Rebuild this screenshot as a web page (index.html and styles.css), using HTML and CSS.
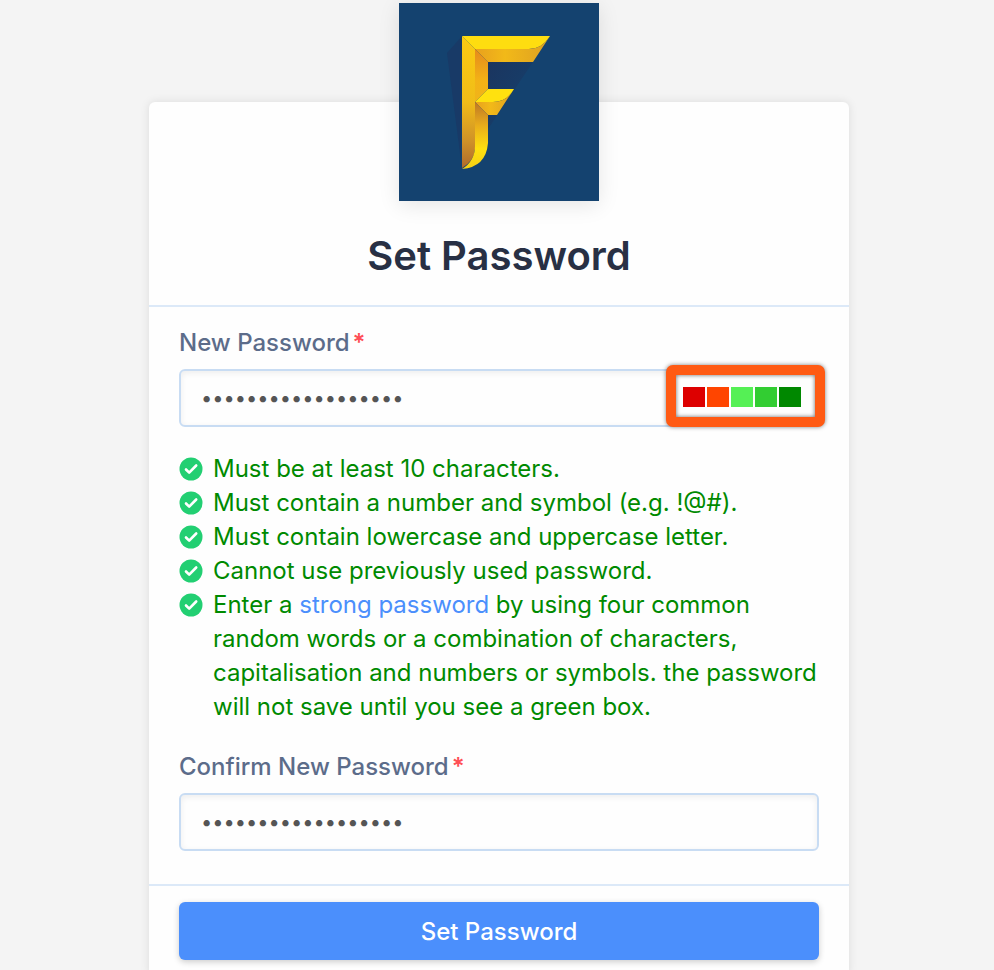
FILE: index.html
```
<!DOCTYPE html>
<html lang="en">
<head>
    <meta charset="utf-8">
    <title>Set Password</title>
    <meta name="viewport" content="width=device-width, initial-scale=1.0">
    <link rel="stylesheet" href="styles.css">
</head>
<body>
    <!-- shared check icon for the rules list -->
    <svg class="icon-defs" aria-hidden="true">
        <symbol id="check" viewBox="0 0 24 24">
            <circle cx="12" cy="12" r="11.5" fill="#22cf72"/>
            <path d="M7 12.5l3.2 3.2L17.2 8.5" fill="none" stroke="#fff" stroke-width="2.6" stroke-linecap="round" stroke-linejoin="round"/>
        </symbol>
    </svg>

    <form class="card">
        <div class="card-header">
            <svg class="logo" viewBox="0 0 200 198" role="img" aria-label="Logo">
                <defs>
                    <linearGradient id="stem" x1="0" y1="0" x2="0" y2="1">
                        <stop offset="0" stop-color="#fbcb12"/>
                        <stop offset="0.5" stop-color="#f0bc18"/>
                        <stop offset="0.8" stop-color="#cf9128"/>
                        <stop offset="1" stop-color="#b06a2c"/>
                    </linearGradient>
                    <linearGradient id="inner" x1="0" y1="0" x2="0" y2="1">
                        <stop offset="0" stop-color="#e58a1c"/>
                        <stop offset="0.6" stop-color="#f3b216"/>
                        <stop offset="1" stop-color="#f0b41a"/>
                    </linearGradient>
                    <linearGradient id="bar" x1="0" y1="0" x2="1" y2="0">
                        <stop offset="0" stop-color="#e8a01e"/>
                        <stop offset="0.4" stop-color="#f2b918"/>
                        <stop offset="1" stop-color="#dda023"/>
                    </linearGradient>
                    <linearGradient id="hook" x1="0" y1="0" x2="0" y2="1">
                        <stop offset="0" stop-color="#bd7626"/>
                        <stop offset="0.35" stop-color="#e9ad1b"/>
                        <stop offset="0.7" stop-color="#ffe00f"/>
                        <stop offset="1" stop-color="#f5cf14"/>
                    </linearGradient>
                    <linearGradient id="shade" x1="0" y1="0" x2="1" y2="1">
                        <stop offset="0" stop-color="#1b355f"/>
                        <stop offset="1" stop-color="#14426f"/>
                    </linearGradient>
                </defs>
                <rect width="200" height="198" fill="#14426f"/>
                <path d="M63 33L48 50L62 158z" fill="#183a67"/>
                <path d="M89 59h45L89 126z" fill="url(#shade)"/>
                <path d="M63 33L76 46V146Q75 158 63 165z" fill="url(#stem)"/>
                <path d="M63 33H151Q143 46 130 46H76z" fill="#fedd10"/>
                <path d="M76 46H130Q143 46 151 33L134 59H89z" fill="url(#bar)"/>
                <path d="M76 46L89 59V86L76 99z" fill="url(#inner)"/>
                <path d="M89 86H115Q108 99 94 99H76z" fill="#ffe10f"/>
                <path d="M76 99H94Q108 99 115 86L98 112H89z" fill="url(#bar)"/>
                <path d="M76 99L89 112V140Q87 164 63 166Q76 158 76 143z" fill="url(#hook)"/>
            </svg>
            <h1>Set Password</h1>
        </div>

        <div class="card-body">
            <label for="newPassword">New Password<span class="required">*</span></label>
            <div class="password-field">
                <input type="password" id="newPassword" value="Correct-Horse-2024">
                <div class="strength" role="img" aria-label="Password strength">
                    <span class="box very-weak"></span>
                    <span class="box weak"></span>
                    <span class="box fair"></span>
                    <span class="box good"></span>
                    <span class="box strong"></span>
                </div>
            </div>

            <ul class="rules">
                <li><svg class="check"><use href="#check"/></svg><span>Must be at least 10 characters.</span></li>
                <li><svg class="check"><use href="#check"/></svg><span>Must contain a number and symbol (e.g. !@#).</span></li>
                <li><svg class="check"><use href="#check"/></svg><span>Must contain lowercase and uppercase letter.</span></li>
                <li><svg class="check"><use href="#check"/></svg><span>Cannot use previously used password.</span></li>
                <li><svg class="check"><use href="#check"/></svg><span>Enter a <a href="#">strong password</a> by using four common random words or a combination of characters, capitalisation and numbers or symbols. the password will not save until you see a green box.</span></li>
            </ul>

            <label for="confirmPassword">Confirm New Password<span class="required">*</span></label>
            <div class="password-field">
                <input type="password" id="confirmPassword" value="Correct-Horse-2024">
            </div>
        </div>

        <div class="card-footer">
            <button type="submit">Set Password</button>
        </div>
    </form>
</body>
</html>
```
FILE: styles.css
```
* {
    box-sizing: border-box;
}

body {
    margin: 0;
    padding: 102px 16px 0 20px;
    background: #f4f4f4;
    font-family: Inter, "Liberation Sans", sans-serif;
    font-size: 24px;
    line-height: 34px;
}

.icon-defs {
    display: none;
}

.card {
    max-width: 700px;
    margin: 0 auto;
    background: #fefefe;
    border-radius: 6px;
    box-shadow: 0 0 10px rgba(0, 0, 0, 0.1);
}

.card-header {
    display: flex;
    flex-direction: column;
    align-items: center;
    padding-bottom: 20px;
    border-bottom: 2px solid #dce9f8;
}

.logo {
    width: 200px;
    height: 198px;
    margin-top: -99px;
    box-shadow: 0 4px 20px rgba(0, 0, 0, 0.1);
}

h1 {
    margin: 26px 0 0;
    color: #283044;
    font-size: 40px;
    font-weight: 600;
    line-height: 58px;
}

.card-body {
    padding: 19px 30px 33px;
}

label {
    display: block;
    margin-bottom: 9px;
    color: #5c6c8a;
    font-weight: 500;
}

.required {
    margin-left: 3px;
    color: #ff4f55;
    font-weight: 600;
}

.password-field {
    position: relative;
}

input {
    display: block;
    width: 100%;
    height: 58px;
    padding: 0 20px;
    border: 2px solid #c8dcf3;
    border-radius: 6px;
    background: #fefefe;
    box-shadow: inset 0 2px 6px rgba(0, 0, 0, 0.07);
    color: #555;
    font-family: inherit;
    font-size: 20px;
}

/* sits over the right end of the input */
.strength {
    position: absolute;
    top: -4px;
    right: -6px;
    display: flex;
    gap: 2px;
    width: 159px;
    height: 62px;
    padding: 12px 7px;
    border: 10px solid #ff5a13;
    border-radius: 7px;
    background: #fefefe;
    box-shadow: 0 0 4px rgba(0, 0, 0, 0.5), inset 0 0 4px rgba(0, 0, 0, 0.6);
}

.box {
    width: 22px;
    height: 20px;
}

.very-weak {
    background: #dd0000;
}

.weak {
    background: #ff4500;
}

.fair {
    background: #55f055;
}

.good {
    background: #32cd32;
}

.strong {
    background: #008800;
}

.rules {
    margin: 25px 0 26px;
    padding: 0;
    list-style: none;
    color: #008a00;
}

.rules li {
    display: flex;
    gap: 10px;
}

.rules a {
    color: #4b8ffc;
    text-decoration: none;
}

.check {
    flex: none;
    width: 24px;
    height: 24px;
    margin-top: 5px;
}

.card-footer {
    padding: 16px 30px;
    border-top: 2px solid #dce9f8;
}

button {
    display: block;
    width: 100%;
    height: 58px;
    border: 0;
    border-radius: 6px;
    background: #4b8ffc;
    box-shadow: 0 2px 6px rgba(0, 0, 0, 0.2);
    color: #fff;
    font-family: inherit;
    font-size: 24px;
    font-weight: 500;
    cursor: pointer;
}
```
